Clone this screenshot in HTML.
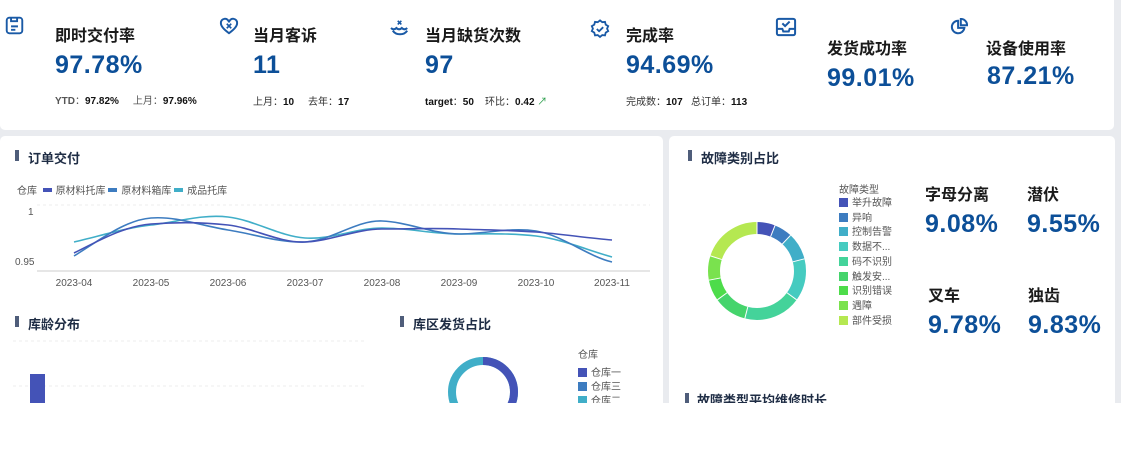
<!DOCTYPE html>
<html><head><meta charset="utf-8"><style>
*{margin:0;padding:0;box-sizing:border-box}
body{width:1121px;height:455px;background:#fff;position:relative;overflow:hidden;font-family:"Liberation Sans","Noto Sans CJK SC",sans-serif;color:#222}
.bg{position:absolute;left:0;top:0;width:1121px;height:403px;background:#e9ebef}
.card{position:absolute;background:#fff;border-radius:5px}
.a{position:absolute;white-space:nowrap}
.t{font-size:16px;font-weight:bold;color:#1a1a1a}
.v{font-size:25px;font-weight:bold;color:#0c4f98;letter-spacing:0.5px}
.s{font-size:10px;color:#333}
.s b{color:#111}
.h{font-size:13px;font-weight:bold;color:#1f2d45}
.bar{position:absolute;width:4px;height:11px;background:#4f5d7a}
.lg{font-size:10px;color:#555}
.sq{display:inline-block;width:9px;height:9px;margin-right:4px;vertical-align:-1px}
</style></head><body>
<div class="bg"></div>
<div class="card" style="left:0;top:0;width:1114px;height:130px;border-radius:0 0 5px 5px"></div>
<div class="card" style="left:0;top:136px;width:663px;height:280px"></div>
<div class="card" style="left:669px;top:136px;width:446px;height:280px"></div>

<!-- icons -->
<svg class="a" style="left:5px;top:16px" width="19" height="19" viewBox="0 0 22 22" fill="none" stroke="#1a5aa6" stroke-width="2.2"><rect x="2" y="2" width="18" height="18" rx="3"/><path d="M7 2v4h7V2M7 12h8M7 16h5"/></svg>
<svg class="a" style="left:219px;top:17px" width="20" height="18" viewBox="0 0 22 20" fill="none" stroke="#1a5aa6" stroke-width="2.2"><path d="M11 18C4 13 2 10 2 7a4.5 4.5 0 0 1 9-1 4.5 4.5 0 0 1 9 1c0 3-2 6-9 11z"/><path d="M8.5 7.5l5 5M13.5 7.5l-5 5" stroke-width="1.8"/></svg>
<svg class="a" style="left:389px;top:19px" width="22" height="18" viewBox="0 0 24 20" fill="none" stroke="#1a5aa6" stroke-width="2.2"><path d="M9.5 2l4 4M13.5 2l-4 4" stroke-width="1.8"/><path d="M2 10c2 2 4 2 6 0c2 2 4 2 6 0c2 2 4 2 6 0"/><path d="M4 13c2 3 5 4 8 4s6-1 8-4"/></svg>
<svg class="a" style="left:590px;top:19px" width="20" height="20" viewBox="0 0 22 22" fill="none" stroke="#1a5aa6" stroke-width="2"><path d="M11 1.5l2.5 2 3-.3.8 3 2.7 1.6-1.2 2.8 1.2 2.8-2.7 1.6-.8 3-3-.3-2.5 2-2.5-2-3 .3-.8-3-2.7-1.6 1.2-2.8-1.2-2.8 2.7-1.6.8-3 3 .3z"/><path d="M7.5 11l2.5 2.5 4.5-4.5"/></svg>
<svg class="a" style="left:775px;top:17px" width="22" height="20" viewBox="0 0 24 22" fill="none" stroke="#1a5aa6" stroke-width="2.2"><rect x="2" y="2" width="20" height="18" rx="2"/><path d="M2 13h6l1 3h6l1-3h6M8 7l3 3 5-5"/></svg>
<svg class="a" style="left:950px;top:18px" width="18" height="18" viewBox="0 0 20 20" fill="none" stroke="#1a5aa6" stroke-width="2.2"><path d="M9 3a7 7 0 1 0 7 8H9z"/><path d="M12 1v7h7a7 7 0 0 0-7-7z"/></svg>

<!-- top KPI -->
<div class="a t" style="left:55px;top:22px">即时交付率</div>
<div class="a v" style="left:55px;top:51px">97.78%</div>
<div class="a s" style="left:55px;top:92px;color:#555"><b style="color:#555">YTD</b>：<b>97.82%</b>&nbsp;&nbsp;&nbsp;&nbsp;&nbsp;上月：<b>97.96%</b></div>

<div class="a t" style="left:253px;top:22px">当月客诉</div>
<div class="a v" style="left:253px;top:51px">11</div>
<div class="a s" style="left:253px;top:93px">上月：<b>10</b>&nbsp;&nbsp;&nbsp;&nbsp;&nbsp;去年：<b>17</b></div>

<div class="a t" style="left:425px;top:22px">当月缺货次数</div>
<div class="a v" style="left:425px;top:51px">97</div>
<div class="a s" style="left:425px;top:93px"><b>target</b>：<b>50</b>&nbsp;&nbsp;&nbsp;&nbsp;环比：<b>0.42</b> <span style="color:#2a9d4a">↗</span></div>

<div class="a t" style="left:626px;top:22px">完成率</div>
<div class="a v" style="left:626px;top:51px">94.69%</div>
<div class="a s" style="left:626px;top:93px">完成数：<b>107</b>&nbsp;&nbsp;&nbsp;总订单：<b>113</b></div>

<div class="a t" style="left:827px;top:35px">发货成功率</div>
<div class="a v" style="left:827px;top:64px">99.01%</div>
<div class="a t" style="left:986px;top:35px">设备使用率</div>
<div class="a v" style="left:987px;top:62px">87.21%</div>

<!-- 订单交付 -->
<div class="bar" style="left:15px;top:150px"></div>
<div class="a h" style="left:28px;top:148px">订单交付</div>
<div class="a lg" style="left:17px;top:182px">仓库&nbsp;&nbsp;<span class="sq" style="background:#4453b7;height:4px;vertical-align:2px"></span>原材料托库&nbsp;<span class="sq" style="background:#3d7cc0;height:4px;vertical-align:2px"></span>原材料箱库&nbsp;<span class="sq" style="background:#40aec8;height:4px;vertical-align:2px"></span>成品托库</div>
<div class="a lg" style="left:28px;top:207px">1</div>
<div class="a lg" style="left:15px;top:257px">0.95</div>
<svg class="a" style="left:0;top:195px" width="663" height="100">
<line x1="37" y1="10" x2="650" y2="10" stroke="#eee" stroke-dasharray="3 3"/>
<line x1="37" y1="76" x2="650" y2="76" stroke="#ccc"/>
<g font-size="10" fill="#555" text-anchor="middle" font-family="Liberation Sans">
<text x="74" y="91">2023-04</text><text x="151" y="91">2023-05</text><text x="228" y="91">2023-06</text><text x="305" y="91">2023-07</text><text x="382" y="91">2023-08</text><text x="459" y="91">2023-09</text><text x="536" y="91">2023-10</text><text x="612" y="91">2023-11</text></g>
<g fill="none" stroke-width="1.6" transform="translate(0,-195)">
<path stroke="#40aec8" d="M74 242C100 236 125 228 151 225S202 214 228 217S279 236 305 238S356 228 382 228S433 234 459 234S510 233 536 236S587 250 612 257"/>
<path stroke="#3d7cc0" d="M74 256C100 240 125 220 151 218S202 226 228 230S279 243 305 242S356 220 382 221S433 234 459 234S510 227 536 231S587 256 612 262"/>
<path stroke="#4453b7" d="M74 253C100 240 125 226 151 224S202 222 228 225S279 243 305 242S356 229 382 229S433 228 459 229S510 230 536 232S587 238 612 240"/>
</g></svg>

<!-- 库龄分布 -->
<div class="bar" style="left:15px;top:316px"></div>
<div class="a h" style="left:28px;top:314px">库龄分布</div>
<svg class="a" style="left:0;top:335px" width="380" height="70"><line x1="13" y1="6" x2="366" y2="6" stroke="#eee" stroke-dasharray="3 3"/><line x1="13" y1="51" x2="366" y2="51" stroke="#eee" stroke-dasharray="3 3"/><rect x="30" y="39" width="15" height="40" fill="#4453b7"/></svg>

<!-- 库区发货占比 -->
<div class="bar" style="left:400px;top:316px"></div>
<div class="a h" style="left:413px;top:314px">库区发货占比</div>
<svg class="a" style="left:440px;top:350px" width="90" height="90"><circle cx="43" cy="42" r="31" fill="none" stroke="#40aec8" stroke-width="8"/><path d="M43 11A31 31 0 0 1 74 42A31 31 0 0 1 60 68" fill="none" stroke="#4453b7" stroke-width="8"/></svg>
<div class="a lg" style="left:578px;top:346px">仓库</div>
<div class="a lg" style="left:578px;top:364px"><span class="sq" style="background:#4453b7"></span>仓库一</div>
<div class="a lg" style="left:578px;top:378px"><span class="sq" style="background:#3d7cc0"></span>仓库三</div>
<div class="a lg" style="left:578px;top:392px"><span class="sq" style="background:#40aec8"></span>仓库二</div>

<!-- 故障类别占比 -->
<div class="bar" style="left:688px;top:150px"></div>
<div class="a h" style="left:701px;top:148px">故障类别占比</div>
<svg class="a" style="left:707px;top:221px" width="100" height="100" viewBox="0 0 100 100">
<g fill="none" stroke-width="12" transform="rotate(-90 50 50)">
<circle cx="50" cy="50" r="43" stroke="#4453b7" stroke-dasharray="16.2 254" stroke-dashoffset="0"/>
<circle cx="50" cy="50" r="43" stroke="#3d7cc0" stroke-dasharray="16.2 254" stroke-dashoffset="-16.2"/>
<circle cx="50" cy="50" r="43" stroke="#40aec8" stroke-dasharray="24.3 246" stroke-dashoffset="-32.4"/>
<circle cx="50" cy="50" r="43" stroke="#45cbc0" stroke-dasharray="37.8 232" stroke-dashoffset="-56.7"/>
<circle cx="50" cy="50" r="43" stroke="#44d39a" stroke-dasharray="51.3 219" stroke-dashoffset="-94.5"/>
<circle cx="50" cy="50" r="43" stroke="#45d46c" stroke-dasharray="29.7 240" stroke-dashoffset="-145.8"/>
<circle cx="50" cy="50" r="43" stroke="#4ddc4a" stroke-dasharray="18.9 251" stroke-dashoffset="-175.5"/>
<circle cx="50" cy="50" r="43" stroke="#7ae24e" stroke-dasharray="21.6 248" stroke-dashoffset="-194.4"/>
<circle cx="50" cy="50" r="43" stroke="#b5e851" stroke-dasharray="54 216" stroke-dashoffset="-216"/>
</g>
<g stroke="#fff" stroke-width="1" transform="translate(50 50)">
<line x1="0" y1="-37" x2="0" y2="-49" transform="rotate(0)"/><line x1="0" y1="-37" x2="0" y2="-49" transform="rotate(21.6)"/><line x1="0" y1="-37" x2="0" y2="-49" transform="rotate(43.2)"/><line x1="0" y1="-37" x2="0" y2="-49" transform="rotate(75.6)"/><line x1="0" y1="-37" x2="0" y2="-49" transform="rotate(126)"/><line x1="0" y1="-37" x2="0" y2="-49" transform="rotate(194.4)"/><line x1="0" y1="-37" x2="0" y2="-49" transform="rotate(234)"/><line x1="0" y1="-37" x2="0" y2="-49" transform="rotate(259.2)"/><line x1="0" y1="-37" x2="0" y2="-49" transform="rotate(288)"/></g>
</svg>
<div class="a lg" style="left:839px;top:181px">故障类型</div>
<div class="a lg" style="left:839px;top:197px;line-height:14.7px">
<div><span class="sq" style="background:#4453b7"></span>举升故障</div>
<div><span class="sq" style="background:#3d7cc0"></span>异响</div>
<div><span class="sq" style="background:#40aec8"></span>控制告警</div>
<div><span class="sq" style="background:#45cbc0"></span>数据不...</div>
<div><span class="sq" style="background:#44d39a"></span>码不识别</div>
<div><span class="sq" style="background:#45d46c"></span>触发安...</div>
<div><span class="sq" style="background:#4ddc4a"></span>识别错误</div>
<div><span class="sq" style="background:#7ae24e"></span>遇障</div>
<div><span class="sq" style="background:#b5e851"></span>部件受损</div></div>

<div class="a t" style="left:925px;top:181px">字母分离</div>
<div class="a v" style="left:925px;top:210px">9.08%</div>
<div class="a t" style="left:1027px;top:181px">潜伏</div>
<div class="a v" style="left:1027px;top:210px">9.55%</div>
<div class="a t" style="left:928px;top:282px">叉车</div>
<div class="a v" style="left:928px;top:311px">9.78%</div>
<div class="a t" style="left:1028px;top:282px">独齿</div>
<div class="a v" style="left:1028px;top:311px">9.83%</div>

<div class="bar" style="left:685px;top:393px"></div>
<div class="a h" style="left:697px;top:390px">故障类型平均维修时长</div>
<div style="position:absolute;left:0;top:403px;width:1121px;height:52px;background:#fff"></div>
</body></html>
